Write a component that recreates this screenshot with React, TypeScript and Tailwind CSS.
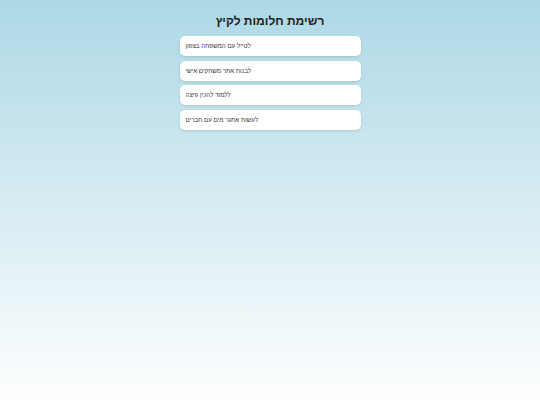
export default function App() {
  const items = [
    "לטייל עם המשפחה בצפון",
    "לבנות אתר משחקים אישי",
    "ללמוד להכין פיצה",
    "לעשות אתגר מים עם חברים",
  ];
  return (
    <div
      className="min-h-[405px] w-full bg-gradient-to-b from-[#add8e6] to-white pt-[13px]"
      style={{ fontFamily: '"Liberation Sans", Arial, sans-serif' }}
    >
      <h1 className="text-center text-[12px] font-bold leading-[16px] text-[#222] mb-[7px]">
        רשימת חלומות לקיץ
      </h1>
      <div className="mx-auto flex w-[181px] flex-col gap-[4.5px]">
        {items.map((t) => (
          <div
            key={t}
            className="flex h-[20px] items-center rounded-[5px] bg-white px-[6px] text-[6.2px] text-[#333] shadow-[0_1px_3px_rgba(0,0,0,0.12)]"
          >
            {t}
          </div>
        ))}
      </div>
    </div>
  );
}
